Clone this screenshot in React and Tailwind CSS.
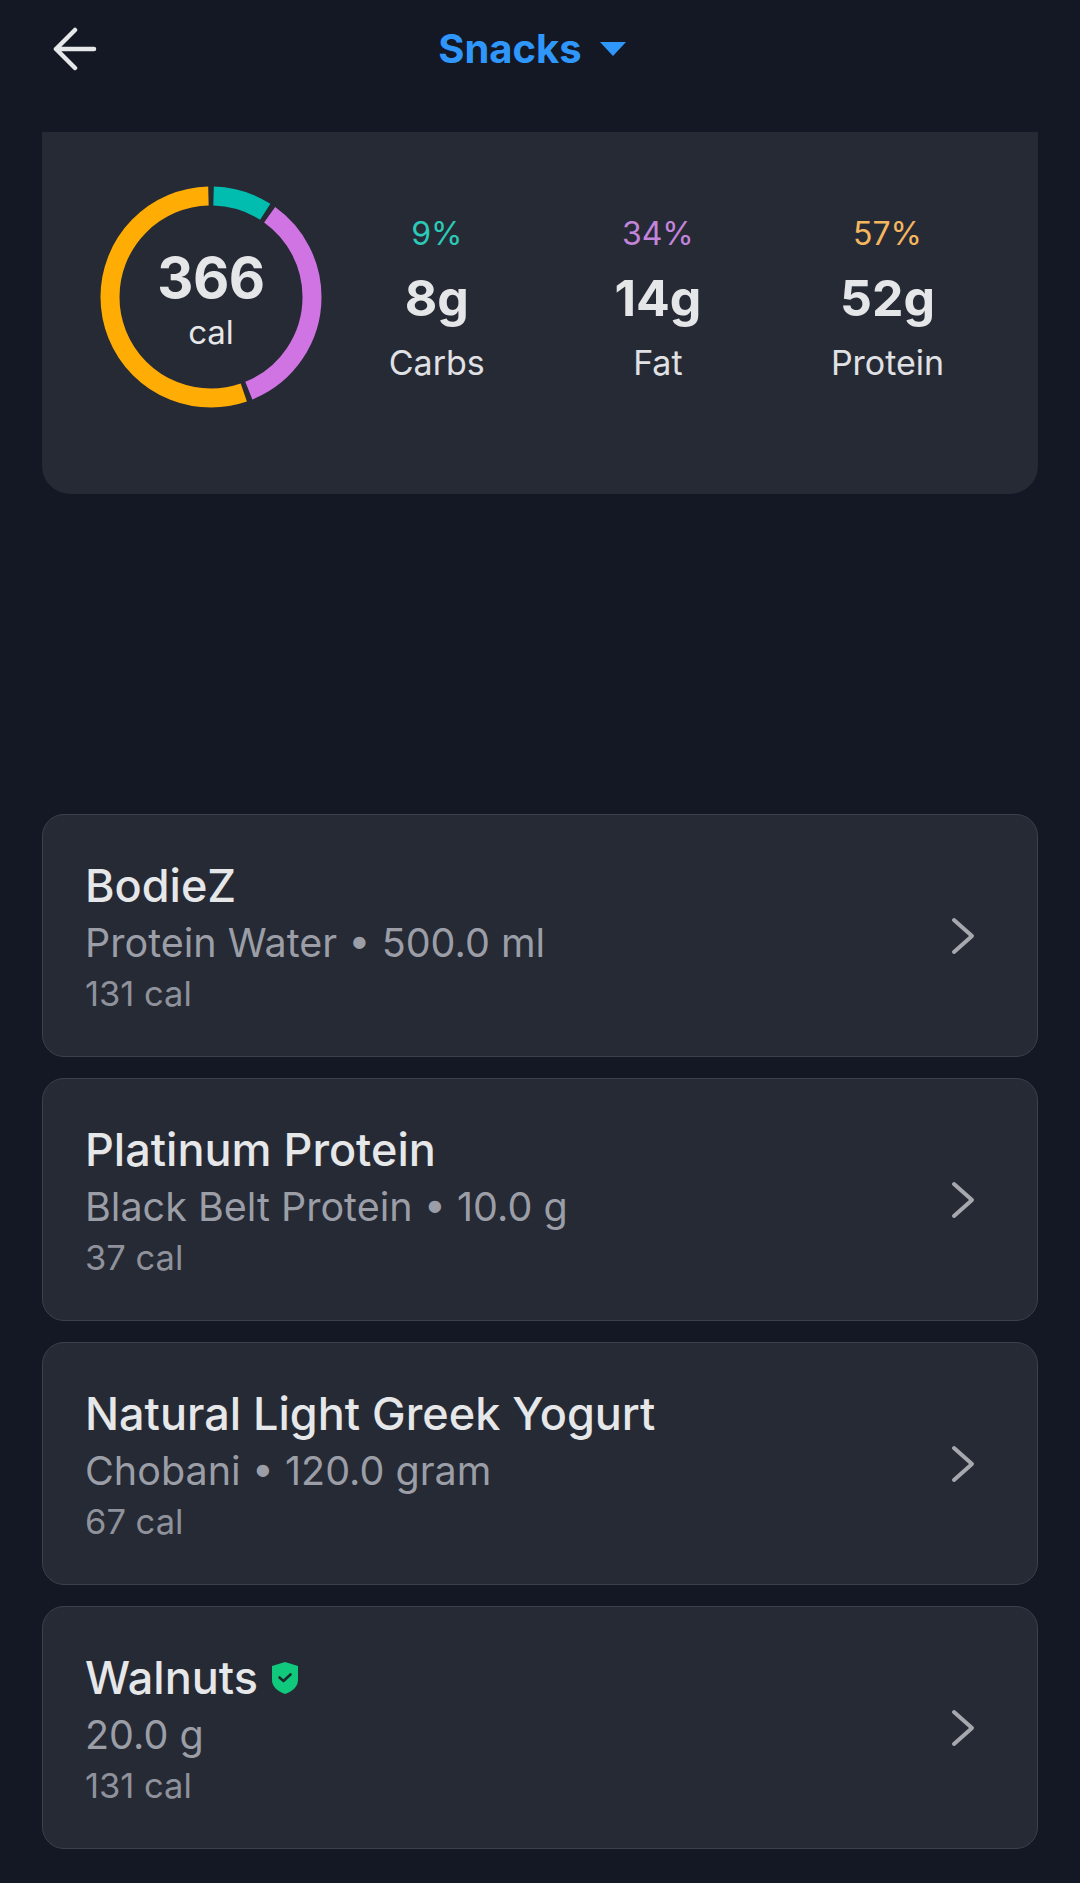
import React from 'react';

const macros = [
    { pct: '9%', grams: '8g', label: 'Carbs', color: 'text-[#2cc9b8]' },
    { pct: '34%', grams: '14g', label: 'Fat', color: 'text-[#c384dc]' },
    { pct: '57%', grams: '52g', label: 'Protein', color: 'text-[#f4b65f]' },
];

const foods = [
    { name: 'BodieZ', detail: 'Protein Water • 500.0 ml', cal: '131 cal' },
    { name: 'Platinum Protein', detail: 'Black Belt Protein • 10.0 g', cal: '37 cal' },
    { name: 'Natural Light Greek Yogurt', detail: 'Chobani • 120.0 gram', cal: '67 cal' },
    { name: 'Walnuts', detail: '20.0 g', cal: '131 cal', verified: true },
];

// arcs are in degrees, clockwise from the top of the ring
const arcs = [
    { from: 1.5, to: 32.5, color: '#00bdb0' },
    { from: 35.5, to: 158, color: '#d074e4' },
    { from: 161, to: 358.5, color: '#ffad05' },
];

const Ring = () => (
    <div className="relative w-[222px] h-[222px] shrink-0">
        <svg width="222" height="222" viewBox="0 0 222 222" className="-rotate-90">
            {arcs.map(a => (
                <circle
                    key={a.color}
                    cx="111"
                    cy="111"
                    r="101"
                    fill="none"
                    stroke={a.color}
                    strokeWidth="19"
                    pathLength="360"
                    strokeDasharray={`${a.to - a.from} 360`}
                    strokeDashoffset={-a.from}
                />
            ))}
        </svg>
        <div className="absolute inset-0 flex flex-col items-center justify-center pt-[3px]">
            <span className="text-[56px] leading-[62px] font-bold text-[#e5e6e8] tracking-[-0.5px]">366</span>
            <span className="text-[33px] leading-[38px] text-[#e5e6e8] mt-[4px]">cal</span>
        </div>
    </div>
);

const Shield = () => (
    <svg width="26" height="32" viewBox="0 0 26 32" className="ml-[14px] shrink-0">
        <path d="M13 0 L26 4 V18 C26 25 20 29.5 13 32 C6 29.5 0 25 0 18 V4 Z" fill="#10c97c" />
        <path d="M7.5 15.5 L11.5 19 L18.5 12.5" fill="none" stroke="#1c2a2c" strokeWidth="2.6" strokeLinecap="round" strokeLinejoin="round" />
    </svg>
);

const FoodCard = ({ food }) => (
    <div className="h-[243px] flex items-center justify-between bg-[#262a35] border-[1.5px] border-[#3c404b] rounded-[22px] pl-[42px] pr-[62px]">
        <div className="flex flex-col pt-[2px]">
            <div className="flex items-center h-[56px]">
                <span className="text-[45px] leading-[56px] font-medium text-[#e6e7e9]">{food.name}</span>
                {food.verified && <Shield />}
            </div>
            <span className="text-[39.5px] leading-[50px] text-[#9b9ea6] mt-[4px]">{food.detail}</span>
            <span className="text-[34.5px] leading-[42px] text-[#8f929b] mt-[5px]">{food.cal}</span>
        </div>
        <svg width="24" height="38" viewBox="0 0 24 38" className="shrink-0">
            <path d="M3 3 L21 19 L3 35" fill="none" stroke="#a6a8ae" strokeWidth="4" strokeLinecap="round" strokeLinejoin="round" />
        </svg>
    </div>
);

export default function App() {
    return (
        <div className="w-[1080px] h-[1883px] bg-[#141824] overflow-hidden" style={{ fontFamily: 'Inter, sans-serif' }}>
            {/* Header */}
            <div className="relative h-[132px] flex justify-center pt-[24px]">
                <svg width="46" height="44" viewBox="0 0 46 44" className="absolute left-[52px] top-[27px]">
                    <path d="M42 22 H4 M23 3 L4 22 L23 41" fill="none" stroke="#e6e7e9" strokeWidth="4.5" strokeLinecap="round" strokeLinejoin="round" />
                </svg>
                <div className="flex items-center h-[50px] gap-[18px] ml-[-16px]">
                    <span className="text-[40px] leading-[50px] font-bold text-[#2f97fb]">Snacks</span>
                    <svg width="26" height="14" viewBox="0 0 26 14">
                        <path d="M0 0 H26 L13 14 Z" fill="#2f97fb" />
                    </svg>
                </div>
            </div>

            {/* Summary */}
            <div className="mx-[42px] h-[362px] bg-[#262a35] rounded-b-[28px] pt-[54px] pl-[58px] pr-[29px] flex items-start">
                <Ring />
                <div className="flex-1 flex justify-around pt-[28px] ml-[2px]">
                    {macros.map(m => (
                        <div key={m.label} className="flex flex-col items-center">
                            <span className={`text-[32px] leading-[40px] ${m.color}`}>{m.pct}</span>
                            <span className="text-[50px] leading-[58px] font-bold text-[#e5e6e8] mt-[15px]">{m.grams}</span>
                            <span className="text-[34px] leading-[42px] text-[#e0e1e4] mt-[15px]">{m.label}</span>
                        </div>
                    ))}
                </div>
            </div>

            {/* Food list */}
            <div className="mx-[42px] mt-[320px] flex flex-col gap-[21px]">
                {foods.map(f => (
                    <FoodCard key={f.name} food={f} />
                ))}
            </div>
        </div>
    );
}
